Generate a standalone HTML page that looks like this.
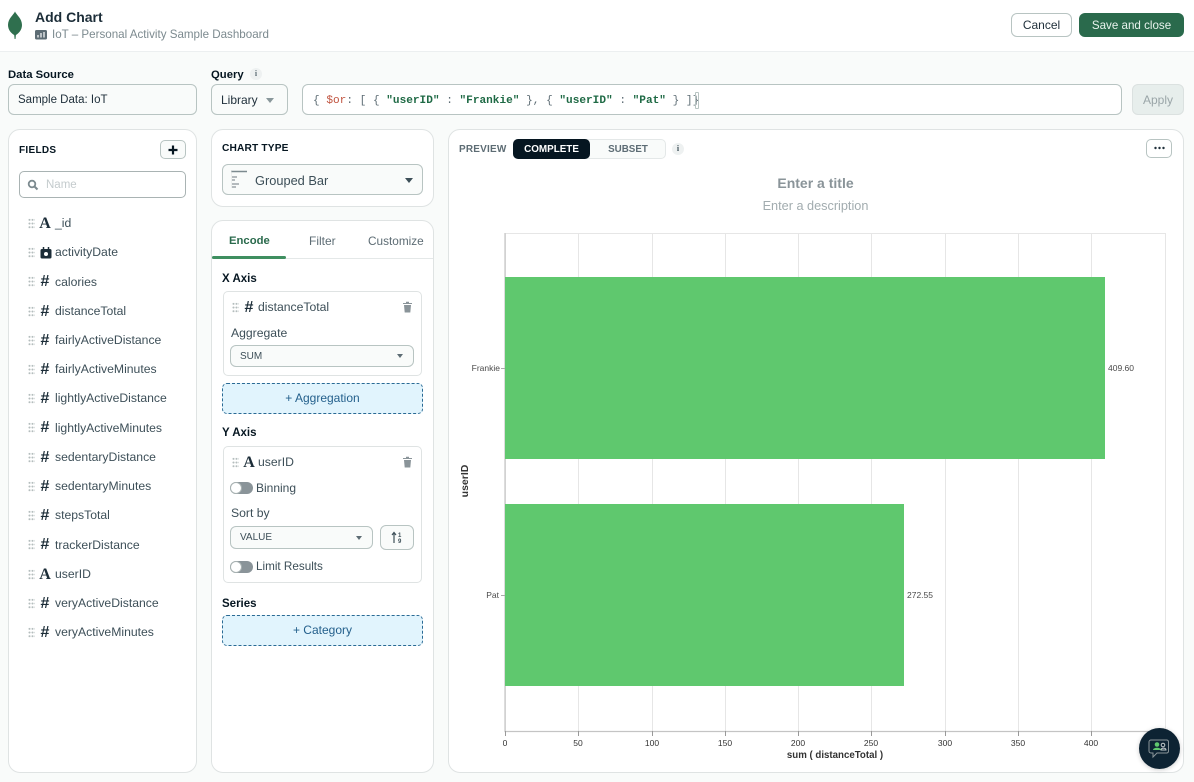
<!DOCTYPE html>
<html><head><meta charset="utf-8"><title>Add Chart</title>
<style>
*{box-sizing:border-box;margin:0;padding:0}
html,body{width:1194px;height:782px;overflow:hidden;background:#f9fbfa;font-family:"Liberation Sans",sans-serif;color:#21313c}
.a{position:absolute}
.t{position:absolute;white-space:nowrap;line-height:16px}
.b{position:absolute;background:#fff;border:1px solid #dfe3e3;border-radius:12px}
.i{position:absolute;border:1.5px solid #b8c4c2;border-radius:6px;background:#f9fbfa}
.car{position:absolute;width:0;height:0;border-left:4px solid transparent;border-right:4px solid transparent;border-top:5px solid #5d6c74}
.g{position:absolute;width:7px;height:11px;background-image:radial-gradient(circle,#b4bdbd 0.9px,transparent 1.1px);background-size:3px 3.7px}
.l{font-size:12.2px;color:#3d4f58}
.h{font-weight:bold;font-size:11.5px;color:#061621}
.ty{position:absolute;font-weight:bold;color:#1c2d38;line-height:16px;text-align:center;width:14px;font-size:16px}
.dash{position:absolute;background:#e1f4fd;border:1px dashed #2a6a94;border-radius:5px;color:#24608c;font-size:12px;text-align:center}
.sw{position:absolute;width:23px;height:12px;border-radius:6px;background:#8a9499}
.sw i{position:absolute;left:0;top:0;width:12px;height:12px;border-radius:50%;background:#fff;border:1px solid #a9b3b3}
svg text{font-family:"Liberation Sans",sans-serif}
</style></head><body>
<!-- header -->
<div class="a" style="left:0;top:0;width:1194px;height:52px;background:#fff;border-bottom:1px solid #eceff0"></div>
<svg class="a" style="left:7px;top:11px" width="16" height="29" viewBox="0 0 16 29"><path d="M8 .5C6.500 4 1 7.500 1 14c0 5 3.500 8.500 6.200 10L7.600 28h.9l.4-4C11.500 22.500 15 19 15 14 15 7.500 9.500 4 8 .5z" fill="#2f6f4e"/></svg>
<div class="t" style="left:35px;top:9px;font-size:14px;font-weight:bold;color:#1c2d38">Add Chart</div>
<svg class="a" style="left:35px;top:30px" width="13" height="10"><rect width="12" height="9.500" rx="1.500" fill="#5d6c74"/><path d="M3 5v2.500M6 3v4.500M9 2v5.500" stroke="#fff" stroke-width="1.200"/></svg>
<div class="t" style="left:52px;top:27px;font-size:11.6px;color:#7c8a8f">IoT – Personal Activity Sample Dashboard</div>
<div class="a" style="left:1011px;top:13px;width:61px;height:24px;background:#fff;border:1.500px solid #b8c4c2;border-radius:6px;font-size:12px;text-align:center;line-height:22.500px;color:#21313c">Cancel</div>
<div class="a" style="left:1079px;top:13px;width:105px;height:24px;background:#2a6a4c;border-radius:6px;font-size:11.6px;text-align:center;line-height:25px;color:#e8f3ed">Save and close</div>

<!-- source row -->
<div class="t h" style="left:8px;top:67px;font-size:11.3px">Data Source</div>
<div class="t h" style="left:211px;top:67px;font-size:11.3px">Query</div>
<div class="a" style="left:250px;top:68px;width:12px;height:12px;border-radius:50%;background:#eef1f1;font:bold 8px/12px 'Liberation Serif',serif;text-align:center;color:#5d6c74">i</div>
<div class="i t" style="left:8px;top:84px;width:189px;height:31px;padding-left:9px;line-height:30px;font-size:11.500px;color:#21313c">Sample Data: IoT</div>
<div class="i t" style="left:211px;top:84px;width:77px;height:31px;padding-left:9px;line-height:30px;font-size:12px;color:#21313c">Library</div>
<div class="car" style="left:266px;top:98px;border-top-color:#89979b"></div>
<div class="i" style="left:302px;top:84px;width:820px;height:31px;background:#fff"></div>
<div class="t" style="left:313px;top:93px;font:11.1px/16px 'Liberation Mono',monospace;color:#5d6c74">{ <span style="color:#c0533f">$or</span>: [ { <b style="color:#1f6a45">"userID"</b> : <b style="color:#1f6a45">"Frankie"</b> }, { <b style="color:#1f6a45">"userID"</b> : <b style="color:#1f6a45">"Pat"</b> } ]}</div>
<div class="a" style="left:695px;top:92px;width:4px;height:17px;border:1px solid #b8c4c2;border-radius:1px"></div>
<div class="a" style="left:1132px;top:84px;width:52px;height:31px;background:#e7eeec;border:1px solid #dbe1e0;border-radius:6px;font-size:12px;text-align:center;line-height:30px;color:#9aa5a8">Apply</div>

<!-- fields panel -->
<div class="b" style="left:8px;top:129px;width:189px;height:644px"></div>
<div class="t h" style="left:19px;top:143px;font-size:10px;letter-spacing:.3px">FIELDS</div>
<div class="a" style="left:160px;top:140px;width:26px;height:19px;background:#f9fbfa;border:1.500px solid #b8c4c2;border-radius:5px"></div>
<svg class="a" style="left:167px;top:144px" width="12" height="12"><path d="M6 1.500v9M1.500 6h9" stroke="#061621" stroke-width="2.200"/></svg>
<div class="a" style="left:19px;top:171px;width:167px;height:27px;background:#fff;border:1.500px solid #a9b3b3;border-radius:5px"></div>
<svg class="a" style="left:27px;top:179px" width="12" height="12"><circle cx="5" cy="5" r="3.300" fill="none" stroke="#7c8a8f" stroke-width="1.800"/><path d="M7.500 7.500l3 3" stroke="#7c8a8f" stroke-width="2"/></svg>
<div class="t" style="left:46px;top:177px;font-size:11.5px;color:#c4cbcd">Name</div>

<div class="g" style="left:28px;top:218px"></div><div class="ty" style="left:38px;top:216px;font-family:'Liberation Serif',serif">A</div><div class="t l" style="left:55px;top:215px">_id</div>
<div class="g" style="left:28px;top:247px"></div>
<svg class="a" style="left:40px;top:247px" width="12" height="12"><rect x=".5" y="2" width="11" height="9.500" rx="1.500" fill="#1c2d38"/><path d="M3.500 0v3M8.500 0v3" stroke="#1c2d38" stroke-width="1.500"/><circle cx="6" cy="7" r="2" fill="#fff"/></svg>
<div class="t l" style="left:55px;top:244px">activityDate</div>
<div class="g" style="left:28px;top:276px"></div><div class="ty" style="left:38px;top:274px">#</div><div class="t l" style="left:55px;top:273.500px">calories</div>
<div class="g" style="left:28px;top:306px"></div><div class="ty" style="left:38px;top:304px">#</div><div class="t l" style="left:55px;top:303px">distanceTotal</div>
<div class="g" style="left:28px;top:335px"></div><div class="ty" style="left:38px;top:333px">#</div><div class="t l" style="left:55px;top:332px">fairlyActiveDistance</div>
<div class="g" style="left:28px;top:364px"></div><div class="ty" style="left:38px;top:362px">#</div><div class="t l" style="left:55px;top:361px">fairlyActiveMinutes</div>
<div class="g" style="left:28px;top:393px"></div><div class="ty" style="left:38px;top:391px">#</div><div class="t l" style="left:55px;top:390px">lightlyActiveDistance</div>
<div class="g" style="left:28px;top:422px"></div><div class="ty" style="left:38px;top:420px">#</div><div class="t l" style="left:55px;top:419.500px">lightlyActiveMinutes</div>
<div class="g" style="left:28px;top:452px"></div><div class="ty" style="left:38px;top:450px">#</div><div class="t l" style="left:55px;top:449px">sedentaryDistance</div>
<div class="g" style="left:28px;top:481px"></div><div class="ty" style="left:38px;top:479px">#</div><div class="t l" style="left:55px;top:478px">sedentaryMinutes</div>
<div class="g" style="left:28px;top:510px"></div><div class="ty" style="left:38px;top:508px">#</div><div class="t l" style="left:55px;top:507px">stepsTotal</div>
<div class="g" style="left:28px;top:539px"></div><div class="ty" style="left:38px;top:537px">#</div><div class="t l" style="left:55px;top:536.500px">trackerDistance</div>
<div class="g" style="left:28px;top:569px"></div><div class="ty" style="left:38px;top:567px;font-family:'Liberation Serif',serif">A</div><div class="t l" style="left:55px;top:566px">userID</div>
<div class="g" style="left:28px;top:598px"></div><div class="ty" style="left:38px;top:596px">#</div><div class="t l" style="left:55px;top:595px">veryActiveDistance</div>
<div class="g" style="left:28px;top:627px"></div><div class="ty" style="left:38px;top:625px">#</div><div class="t l" style="left:55px;top:624px">veryActiveMinutes</div>

<!-- chart type -->
<div class="b" style="left:211px;top:129px;width:223px;height:78px"></div>
<div class="t h" style="left:222px;top:141px;font-size:10.200px;letter-spacing:.15px">CHART TYPE</div>
<div class="i" style="left:222px;top:164px;width:201px;height:31px"></div>
<svg class="a" style="left:231px;top:170px" width="18" height="19"><path d="M0 1.500h16" stroke="#7c8a8f" stroke-width="1.500"/><path d="M0 1v17" stroke="#dfe3e3"/><path d="M1 7h5M1 10h3M1 14h7M1 17h4" stroke="#8a9499" stroke-width="1.300"/></svg>
<div class="t" style="left:255px;top:172.500px;font-size:12.800px;color:#3d4f58">Grouped Bar</div>
<div class="car" style="left:405px;top:178px;border-top-color:#3d4f58"></div>

<!-- encode panel -->
<div class="b" style="left:211px;top:220px;width:223px;height:553px;overflow:hidden"></div>
<div class="t" style="left:229px;top:232.500px;font-size:11.300px;font-weight:bold;color:#2a6a4c">Encode</div>
<div class="t" style="left:309px;top:232.500px;font-size:12px;color:#5d6c74">Filter</div>
<div class="t" style="left:368px;top:232.500px;font-size:11.800px;color:#5d6c74">Customize</div>
<div class="a" style="left:212px;top:258px;width:221px;height:1px;background:#e4e8e8"></div>
<div class="a" style="left:212px;top:256px;width:74px;height:3px;background:#3f8f60;border-radius:2px"></div>
<div class="t h" style="left:222px;top:270.500px">X Axis</div>
<div class="a" style="left:223px;top:291px;width:199px;height:85px;background:#fff;border:1px solid #dfe3e3;border-radius:5px"></div>
<div class="g" style="left:232px;top:302px"></div><div class="ty" style="left:242px;top:300px">#</div>
<div class="t l" style="left:258px;top:299px">distanceTotal</div>
<svg class="a" style="left:402px;top:301px" width="11" height="12"><path d="M1 2h9v1H1zM2 4h7l-.7 7.500H2.700zM4 .8h3V2H4z" fill="#8a9499"/></svg>
<div class="t l" style="left:231px;top:325px">Aggregate</div>
<div class="i" style="left:230px;top:345px;width:184px;height:22px"></div>
<div class="t" style="left:240px;top:349px;font-size:10px;color:#3d4f58">SUM</div>
<div class="car" style="left:397px;top:354px;border-left-width:3.500px;border-right-width:3.500px;border-top-width:4px"></div>
<div class="dash" style="left:222px;top:383px;width:201px;height:31px;line-height:29px">+ Aggregation</div>
<div class="t h" style="left:222px;top:425px">Y Axis</div>
<div class="a" style="left:223px;top:446px;width:199px;height:137px;background:#fff;border:1px solid #dfe3e3;border-radius:5px"></div>
<div class="g" style="left:232px;top:457px"></div><div class="ty" style="left:242px;top:455px;font-family:'Liberation Serif',serif">A</div>
<div class="t l" style="left:258px;top:454px">userID</div>
<svg class="a" style="left:402px;top:456px" width="11" height="12"><path d="M1 2h9v1H1zM2 4h7l-.7 7.500H2.700zM4 .8h3V2H4z" fill="#8a9499"/></svg>
<div class="sw" style="left:230px;top:482px"><i></i></div>
<div class="t l" style="left:256px;top:480px;font-size:12px">Binning</div>
<div class="t l" style="left:231px;top:505px">Sort by</div>
<div class="i" style="left:230px;top:526px;width:143px;height:23px"></div>
<div class="t" style="left:240px;top:530px;font-size:10px;color:#3d4f58">VALUE</div>
<div class="car" style="left:356px;top:536px;border-left-width:3.500px;border-right-width:3.500px;border-top-width:4px"></div>
<div class="i" style="left:380px;top:525px;width:34px;height:25px;background:#f9fbfa"></div>
<svg class="a" style="left:391px;top:531px" width="13" height="13"><path d="M3 12V2M1 4l2-2.500L5 4" fill="none" stroke="#3d4f58" stroke-width="1.200"/><text x="7" y="6" font-size="6" font-weight="bold" fill="#3d4f58">1</text><text x="7" y="12" font-size="6" font-weight="bold" fill="#3d4f58">9</text></svg>
<div class="sw" style="left:230px;top:561px"><i></i></div>
<div class="t l" style="left:256px;top:559px;font-size:11.700px">Limit Results</div>
<div class="t h" style="left:222px;top:596px">Series</div>
<div class="dash" style="left:222px;top:615px;width:201px;height:31px;line-height:29px">+ Category</div>

<!-- preview -->
<div class="b" style="left:448px;top:129px;width:736px;height:644px"></div>
<div class="t" style="left:459px;top:141.500px;font-size:10px;font-weight:bold;color:#5d6c74;letter-spacing:.2px">PREVIEW</div>
<div class="a" style="left:513px;top:139px;width:153px;height:20px;background:#f9fbfa;border:1px solid #e4e8e8;border-radius:5px"></div>
<div class="a" style="left:513px;top:139px;width:77px;height:20px;background:#061621;border-radius:5px;color:#fff;font-size:9.900px;font-weight:bold;text-align:center;line-height:21px">COMPLETE</div>
<div class="a" style="left:590px;top:139px;width:76px;height:20px;color:#5d6c74;font-size:9.800px;font-weight:bold;text-align:center;line-height:21px">SUBSET</div>
<div class="a" style="left:672px;top:143px;width:12px;height:12px;border-radius:50%;background:#eef1f1;font:bold 8px/12px 'Liberation Serif',serif;text-align:center;color:#3d4f58">i</div>
<div class="a" style="left:1146px;top:139px;width:26px;height:19px;background:#fff;border:1.500px solid #b8c4c2;border-radius:5px"></div>
<svg class="a" style="left:1154px;top:146px" width="11" height="4"><circle cx="1.500" cy="2" r="1.200" fill="#21313c"/><circle cx="5.500" cy="2" r="1.200" fill="#21313c"/><circle cx="9.500" cy="2" r="1.200" fill="#21313c"/></svg>
<div class="t" style="left:448px;top:174.500px;width:736px;text-align:center;font-size:14px;font-weight:bold;color:#8a9499;padding-right:1px">Enter a title</div>
<div class="t" style="left:448px;top:198px;width:736px;text-align:center;font-size:12.700px;color:#a2acaf;padding-right:1px">Enter a description</div>

<svg class="a" style="left:448px;top:222px" width="736" height="550">
<g stroke="#e6e6e6" stroke-width="1" fill="none">
<path d="M57.500 11V509M130.500 11V509M204.500 11V509M277.500 11V509M350.500 11V509M423.500 11V509M497.500 11V509M570.500 11V509M643.500 11V509M717.500 11V509"/>
<path d="M57 11.500H717"/>
</g>
<path d="M57 11V509.500H717" fill="none" stroke="#c4c4c4" stroke-width="1.200"/>
<path d="M57.500 509v5M130.500 509v5M204.500 509v5M277.500 509v5M350.500 509v5M423.500 509v5M497.500 509v5M570.500 509v5M643.500 509v5" stroke="#999"/>
<path d="M53 146.500h4M53 373.500h4" stroke="#aaa"/>
<rect x="57" y="55" width="600" height="182" fill="#5fc86e"/>
<rect x="57" y="282" width="399" height="182" fill="#5fc86e"/>
<g font-size="8.500" fill="#4a4a4a">
<text x="52" y="149" text-anchor="end">Frankie</text>
<text x="51" y="376" text-anchor="end">Pat</text>
<text x="660" y="149">409.60</text>
<text x="459" y="376">272.55</text>
<g text-anchor="middle" fill="#333">
<text x="57" y="524">0</text><text x="130" y="524">50</text><text x="204" y="524">100</text><text x="277" y="524">150</text><text x="350" y="524">200</text><text x="423" y="524">250</text><text x="497" y="524">300</text><text x="570" y="524">350</text><text x="643" y="524">400</text>
</g>
</g>
<text x="387" y="536" text-anchor="middle" font-size="9.700" font-weight="bold" fill="#333">sum ( distanceTotal )</text>
<text transform="translate(20 259) rotate(-90)" text-anchor="middle" font-size="10.500" font-weight="bold" fill="#333">userID</text>
</svg>

<!-- chat -->
<div class="a" style="left:1139px;top:728px;width:41px;height:41px;border-radius:50%;background:#0d2333;box-shadow:0 1px 5px rgba(0,0,0,.2)"></div>
<svg class="a" style="left:1148px;top:738px" width="23" height="23"><path d="M3 2h16a2 2 0 0 1 1.500 2v9a2 2 0 0 1-1.500 2H9l-4 4v-4H3a2 2 0 0 1-2-2V4a2 2 0 0 1 2-2z" fill="none" stroke="#8a9499" stroke-width="1"/><circle cx="9" cy="6.500" r="2.300" fill="#5fc86e"/><path d="M5 12c0-3 8-3 8 0z" fill="#5fc86e"/><circle cx="15" cy="7" r="1.800" fill="none" stroke="#c4cbcd"/><path d="M13 12c0-2.500 5-2.500 5 0z" fill="none" stroke="#c4cbcd"/></svg>
</body></html>
